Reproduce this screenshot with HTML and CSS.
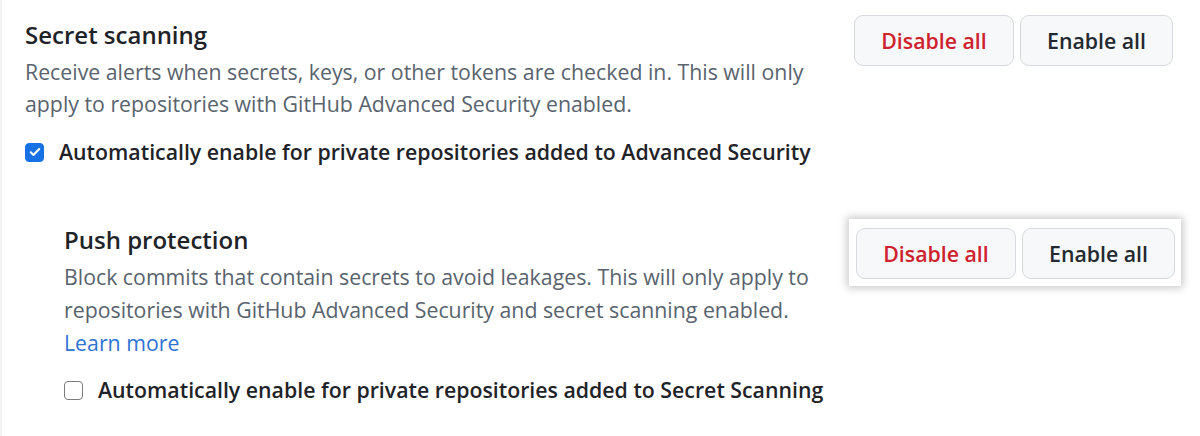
FILE: index.html
```html
<!DOCTYPE html>
<html lang="en">
<head>
<meta charset="utf-8">
<title>Secret scanning</title>
<link rel="stylesheet" href="styles.css">
</head>
<body>
<main class="page">
  <section class="setting">
    <div class="info">
      <h3 class="title">Secret scanning</h3>
      <p class="desc">Receive alerts when secrets, keys, or other tokens are checked in. This will only apply to repositories with GitHub Advanced Security enabled.</p>
      <label class="check">
        <span class="box checked"><svg viewBox="0 0 16 16" width="14" height="14"><path d="M3.2 8.4l3 3 6.6-6.8" fill="none" stroke="#fff" stroke-width="2.4" stroke-linecap="round" stroke-linejoin="round"/></svg></span>
        <span class="label">Automatically enable for private repositories added to Advanced Security</span>
      </label>
    </div>
    <div class="actions">
      <button class="btn danger">Disable all</button>
      <button class="btn">Enable all</button>
    </div>
  </section>

  <section class="setting sub">
    <div class="info">
      <h3 class="title">Push protection</h3>
      <p class="desc">Block commits that contain secrets to avoid leakages. This will only apply to repositories with GitHub Advanced Security and secret scanning enabled.</p>
      <a class="link" href="#">Learn more</a>
      <label class="check">
        <span class="box"></span>
        <span class="label">Automatically enable for private repositories added to Secret Scanning</span>
      </label>
    </div>
    <div class="actions highlight">
      <button class="btn danger">Disable all</button>
      <button class="btn">Enable all</button>
    </div>
  </section>
</main>
</body>
</html>
```
FILE: styles.css
```css
* { box-sizing: border-box; }
html, body { margin: 0; padding: 0; background: #fff; }
body {
  font-family: "Open Sans", "Noto Sans", sans-serif;
  color: #1f2328;
  width: 1200px;
  height: 436px;
  overflow: hidden;
  border-left: 2px solid #f2f2f2;
}
.page {
  display: flex;
  flex-direction: column;
  padding: 15px 0 0 23px;
}
.setting {
  display: flex;
  align-items: flex-start;
  justify-content: space-between;
  width: 1148px;
}
.setting.sub {
  margin-top: 55px;
  padding-left: 39px;
  width: 1156px;
}
.info {
  display: flex;
  flex-direction: column;
  width: 800px;
}
.sub .info { width: 772px; }
.title {
  margin: 0;
  font-size: 24px;
  font-weight: 600;
  line-height: 38px;
}
.setting:first-child .title { margin-top: 1px; }
.sub .title { margin-top: -1px; }
.desc {
  margin: 2px 0 0;
  font-size: 21.3px;
  line-height: 32px;
  color: #59636e;
}
.sub .desc { line-height: 33px; margin-top: 1px; }
.link {
  font-size: 21.3px;
  line-height: 33px;
  color: #2f72d6;
  text-decoration: none;
  align-self: flex-start;
}
.check {
  display: flex;
  align-items: center;
  gap: 15px;
  margin-top: 17px;
  font-size: 21.3px;
  font-weight: 600;
  line-height: 30px;
}
.sub .check { margin-top: 16px; }
.box {
  width: 19px;
  height: 19px;
  border-radius: 4px;
  border: 1.5px solid #7a7a7a;
  display: flex;
  align-items: center;
  justify-content: center;
  flex-shrink: 0;
  background: #fff;
}
.box.checked {
  background: #1672e6;
  border-color: #1672e6;
}
.actions {
  display: flex;
  gap: 6px;
}
.actions.highlight {
  background: #fff;
  padding: 9px 6px 7px 7px;
  margin-top: -3px;
  box-shadow: 0 0 8px 2px rgba(0,0,0,0.22);
}
.btn {
  font-family: inherit;
  font-size: 21.3px;
  font-weight: 600;
  height: 51px;
  padding: 0;
  border: 1.5px solid #d6dade;
  border-radius: 9px;
  background: #f6f8fa;
  color: #24292f;
  cursor: pointer;
}
.btn.danger {
  color: #cf222e;
  width: 160px;
}
.btn:not(.danger) { width: 153px; }
```
